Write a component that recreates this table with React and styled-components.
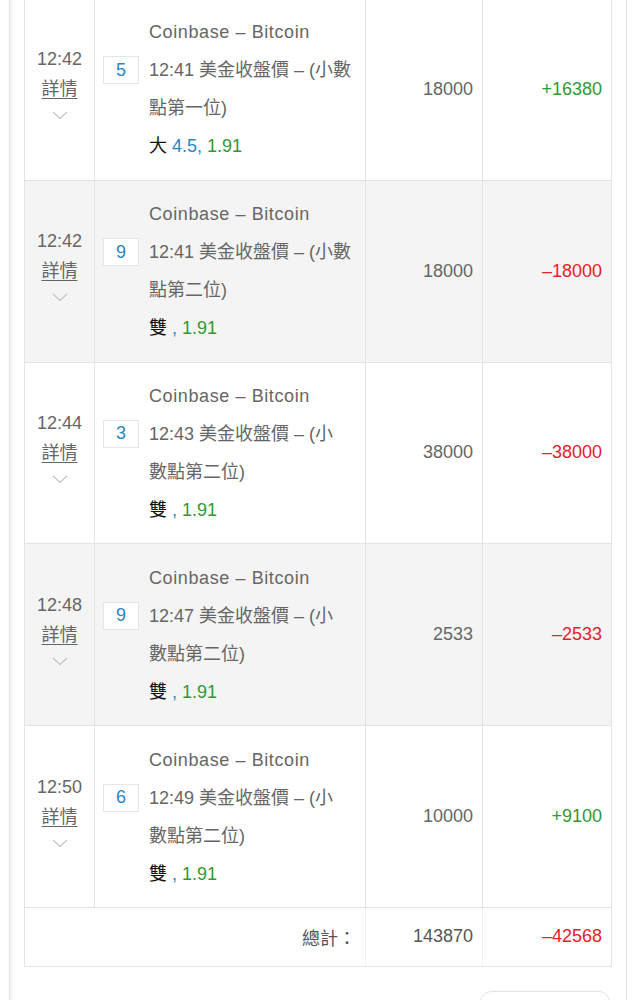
import React from "react";
import styled, { createGlobalStyle } from "styled-components";

const GlobalStyle = createGlobalStyle`
  html, body {
    margin: 0;
    padding: 0;
    background: #fff;
  }
  body {
    font-family: "Liberation Sans", "Noto Sans CJK TC", sans-serif;
    color: #666;
  }
`;

const Page = styled.div`
  margin-top: -2px;
  margin-left: 9px;
  width: 618px;
  box-sizing: border-box;
  border-left: 1px solid #e2e2e2;
  border-right: 1px solid #e2e2e2;
  box-shadow: inset 3px 0 0 #f7f7f7;
  padding: 0 15px 20px 14px;
`;

const Table = styled.table`
  width: 587px;
  table-layout: fixed;
  border-collapse: collapse;
  font-size: 18px;
  td {
    border: 1px solid #e3e3e3;
    vertical-align: middle;
  }
`;

const Row = styled.tr`
  background: ${(p) => (p.$shade ? "#f4f4f4" : "#fff")};
`;

const TimeCell = styled.td`
  text-align: center;
  padding: 0;
  .time {
    line-height: 30px;
  }
  .detail {
    line-height: 30px;
    text-decoration: underline;
    text-underline-offset: 3px;
  }
  .chev {
    height: 30px;
    display: flex;
    justify-content: center;
    align-items: flex-start;
    padding-top: 7px;
    box-sizing: border-box;
  }
`;

const DescCell = styled.td`
  padding: 14.4px 8px;
`;

const DescWrap = styled.div`
  display: flex;
  gap: 10px;
`;

const Badge = styled.span`
  flex: none;
  width: 36px;
  height: 28px;
  margin-top: 43px;
  box-sizing: border-box;
  border: 1px solid #e6e6e6;
  background: #fff;
  color: #2a86c8;
  display: flex;
  align-items: center;
  justify-content: center;
  font-size: 18px;
`;

const Lines = styled.div`
  line-height: 38px;
  white-space: nowrap;
`;

const Source = styled.div`
  letter-spacing: 0.6px;
`;

const Pick = styled.span`
  color: #111;
`;

const Handicap = styled.span`
  color: #2a86c8;
`;

const Odds = styled.span`
  color: #2f9a33;
`;

const NumCell = styled.td`
  text-align: right;
  padding: 0 9px;
  color: ${(p) => p.$color || "#666"};
`;

const TotalRow = styled.tr`
  background: #fff;
  td {
    height: 58px;
    border-color: #f1f1f1;
    border-bottom-color: #e3e3e3;
  }
  td:first-child {
    border-left-color: #e3e3e3;
  }
  td:last-child {
    border-right-color: #e3e3e3;
  }
`;

const Footer = styled.div`
  display: flex;
  justify-content: flex-end;
  padding-top: 24px;
  padding-right: 1px;
`;

const BackButton = styled.button`
  width: 130px;
  height: 42px;
  border: 1px solid #e2e2e2;
  border-radius: 11px;
  background: #fff;
`;

const GREEN = "#2f9a33";
const RED = "#e5202a";

const rows = [
  {
    time: "12:42",
    no: 5,
    lines: ["12:41 美金收盤價 – (小數", "點第一位)"],
    pick: "大",
    hcp: "4.5,",
    amount: "18000",
    result: "+16380",
  },
  {
    time: "12:42",
    no: 9,
    lines: ["12:41 美金收盤價 – (小數", "點第二位)"],
    pick: "雙",
    hcp: "",
    amount: "18000",
    result: "–18000",
  },
  {
    time: "12:44",
    no: 3,
    lines: ["12:43 美金收盤價 – (小", "數點第二位)"],
    pick: "雙",
    hcp: "",
    amount: "38000",
    result: "–38000",
  },
  {
    time: "12:48",
    no: 9,
    lines: ["12:47 美金收盤價 – (小", "數點第二位)"],
    pick: "雙",
    hcp: "",
    amount: "2533",
    result: "–2533",
  },
  {
    time: "12:50",
    no: 6,
    lines: ["12:49 美金收盤價 – (小", "數點第二位)"],
    pick: "雙",
    hcp: "",
    amount: "10000",
    result: "+9100",
  },
];

const Chevron = () => (
  <svg width="16" height="9" viewBox="0 0 16 9" fill="none">
    <path d="M1 1l7 6.5L15 1" stroke="#c2c2c2" strokeWidth="1.1" />
  </svg>
);

export default function App() {
  return (
    <>
      <GlobalStyle />
      <Page>
        <Table>
          <colgroup>
            <col style={{ width: 70 }} />
            <col style={{ width: 271 }} />
            <col style={{ width: 117 }} />
            <col style={{ width: 129 }} />
          </colgroup>
          <tbody>
            {rows.map((r, i) => (
              <Row key={i} $shade={i % 2 === 1}>
                <TimeCell>
                  <div className='time'>{r.time}</div>
                  <div className='detail'>詳情</div>
                  <div className='chev'>
                    <Chevron />
                  </div>
                </TimeCell>
                <DescCell>
                  <DescWrap>
                    <Badge>{r.no}</Badge>
                    <Lines>
                      <Source>Coinbase – Bitcoin</Source>
                      {r.lines.map((l) => (
                        <div key={l}>{l}</div>
                      ))}
                      <div>
                        <Pick>{r.pick}</Pick>{" "}
                        <Handicap>{r.hcp || ","}</Handicap>{" "}
                        <Odds>1.91</Odds>
                      </div>
                    </Lines>
                  </DescWrap>
                </DescCell>
                <NumCell>{r.amount}</NumCell>
                <NumCell $color={r.result.startsWith("+") ? GREEN : RED}>
                  {r.result}
                </NumCell>
              </Row>
            ))}
            <TotalRow>
              <NumCell colSpan={2} $color='#555'>
                總計：
              </NumCell>
              <NumCell $color='#555'>143870</NumCell>
              <NumCell $color={RED}>–42568</NumCell>
            </TotalRow>
          </tbody>
        </Table>
        <Footer>
          <BackButton aria-label='返回' />
        </Footer>
      </Page>
    </>
  );
}
